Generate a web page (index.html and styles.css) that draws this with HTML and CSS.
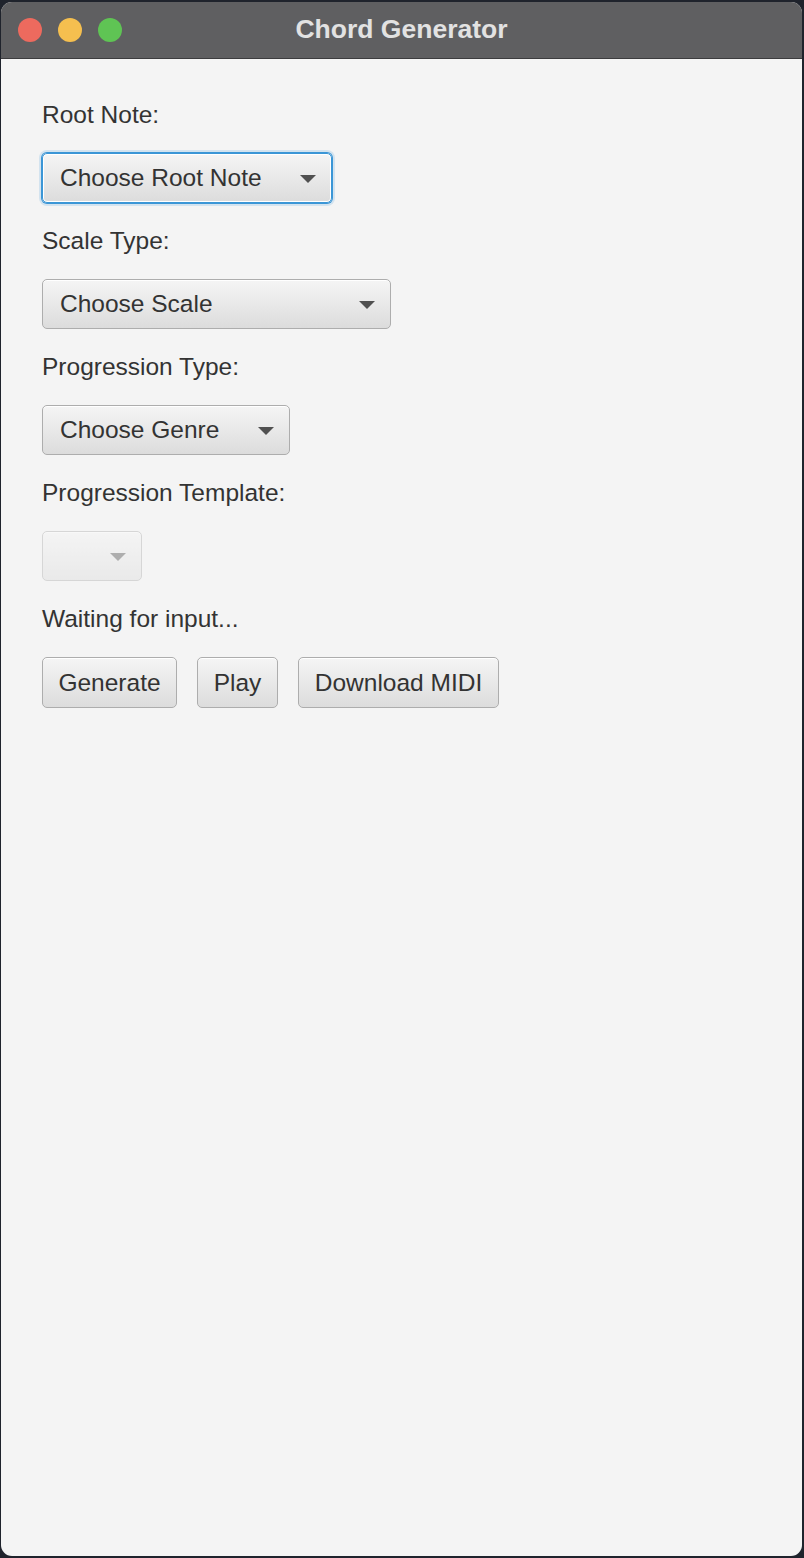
FILE: index.html
```html
<!DOCTYPE html>
<html>
<head>
<meta charset="utf-8">
<title>Chord Generator</title>
<link rel="stylesheet" href="styles.css">
</head>
<body>
<div class="window">
  <div class="titlebar">
    <div class="lights">
      <span class="light red"></span>
      <span class="light yellow"></span>
      <span class="light green"></span>
    </div>
    <div class="title">Chord Generator</div>
  </div>
  <div class="content">
    <div class="label">Root Note:</div>
    <div class="combo combo-root focused"><span class="combo-text">Choose Root Note</span><span class="arrow"></span></div>
    <div class="label">Scale Type:</div>
    <div class="combo combo-scale"><span class="combo-text">Choose Scale</span><span class="arrow"></span></div>
    <div class="label">Progression Type:</div>
    <div class="combo combo-genre"><span class="combo-text">Choose Genre</span><span class="arrow"></span></div>
    <div class="label">Progression Template:</div>
    <div class="combo combo-template disabled"><span class="combo-text"></span><span class="arrow"></span></div>
    <div class="label">Waiting for input...</div>
    <div class="buttons">
      <div class="btn btn-generate">Generate</div>
      <div class="btn btn-play">Play</div>
      <div class="btn btn-midi">Download MIDI</div>
    </div>
  </div>
</div>
</body>
</html>
```
FILE: styles.css
```css
html, body {
  margin: 0;
  padding: 0;
}
body {
  background: #1f232c;
  width: 804px;
  height: 1558px;
  overflow: hidden;
  font-family: "Liberation Sans", Arial, sans-serif;
}
.window {
  margin: 2px 2px 0 1px;
  height: 1554px;
  border-radius: 11px;
  overflow: hidden;
  background: #f4f4f4;
  display: flex;
  flex-direction: column;
}
.titlebar {
  height: 56px;
  background: #5f5f61;
  border-bottom: 1px solid #3c3c3e;
  display: flex;
  align-items: center;
  position: relative;
  flex: none;
}
.lights {
  display: flex;
  gap: 16px;
  padding-left: 17px;
}
.light {
  width: 24px;
  height: 24px;
  border-radius: 50%;
  display: block;
}
.red { background: #ed6a5e; }
.yellow { background: #f5bf4f; }
.green { background: #5fc454; }
.title {
  position: absolute;
  left: 0;
  right: 0;
  top: 0;
  bottom: 2px;
  display: flex;
  align-items: center;
  justify-content: center;
  color: #e2e2e2;
  font-weight: bold;
  font-size: 26.5px;
}
.content {
  flex: 1;
  display: flex;
  flex-direction: column;
  align-items: flex-start;
  gap: 24px;
  padding: 42px 0 0 41px;
  color: #333333;
  font-size: 24.5px;
}
.label {
  line-height: 28px;
  height: 28px;
  white-space: nowrap;
}
.combo, .btn {
  box-sizing: border-box;
  height: 50px;
  border: 1px solid #adadad;
  border-radius: 5px;
  background: linear-gradient(#f5f5f5, #dcdcdc);
  box-shadow: inset 0 1px 0 #ffffff;
  display: flex;
  align-items: center;
  color: #333333;
  white-space: nowrap;
}
.combo {
  padding: 0 15px 0 17px;
  justify-content: space-between;
}
.combo-root { width: 290px; }
.combo-scale { width: 349px; }
.combo-genre { width: 248px; }
.combo-template { width: 100px; }
.focused {
  border-color: #3b96d6;
  box-shadow: 0 0 0 1px #3b96d6, 0 0 0 3px rgba(59,150,214,0.18), inset 0 0 0 1px #ffffff;
}
.disabled {
  opacity: 0.42;
}
.arrow {
  width: 0;
  height: 0;
  border-left: 8.5px solid transparent;
  border-right: 8.5px solid transparent;
  border-top: 8px solid #505050;
  margin-top: 1px;
}
.buttons {
  display: flex;
  gap: 20px;
}
.btn {
  height: 51px;
  padding: 0 17px;
  justify-content: center;
}
.btn-generate { width: 135px; }
.btn-play { width: 81px; }
.btn-midi { width: 201px; }
```
